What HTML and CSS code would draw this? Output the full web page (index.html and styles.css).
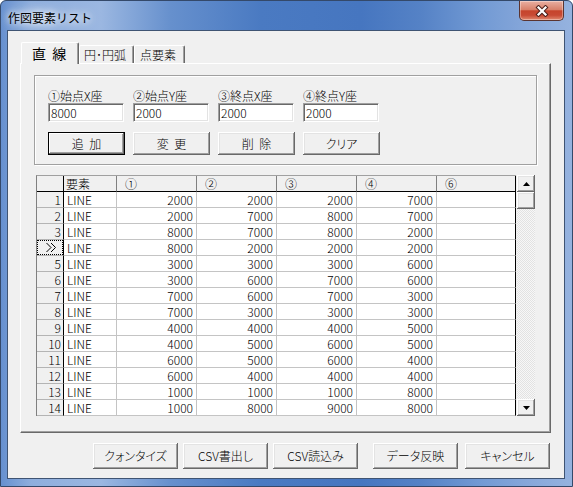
FILE: index.html
```html
<!DOCTYPE html>
<html lang="ja">
<head>
<meta charset="utf-8">
<title>作図要素リスト</title>
<link rel="stylesheet" href="styles.css">
</head>
<body>
<div class="window">
  <div class="titlebar">
    <span class="title">作図要素リスト</span>
    <div class="close">
      <svg width="14" height="12" viewBox="0 0 14 12"><path d="M3.5 2.5 L10.5 9.5 M10.5 2.5 L3.5 9.5" stroke="#4a1f1a" stroke-width="4.2" stroke-linecap="square" fill="none"/><path d="M3.5 2.5 L10.5 9.5 M10.5 2.5 L3.5 9.5" stroke="#ffffff" stroke-width="2.2" stroke-linecap="square" fill="none"/></svg>
    </div>
  </div>
  <div class="client">
    <div class="tabs">
      <div class="tab active">直&nbsp;&nbsp;線</div>
      <div class="tab t2">円･円弧</div>
      <div class="tab t3">点要素</div>
    </div>
    <div class="panel">
      <div class="group">
        <div class="fields">
          <div class="field"><div class="label">①始点X座</div><div class="input">8000</div></div>
          <div class="field"><div class="label">②始点Y座</div><div class="input">2000</div></div>
          <div class="field"><div class="label">③終点X座</div><div class="input">2000</div></div>
          <div class="field"><div class="label">④終点Y座</div><div class="input">2000</div></div>
        </div>
        <div class="actions">
          <div class="btn default">追&nbsp;&nbsp;加</div>
          <div class="btn">変&nbsp;&nbsp;更</div>
          <div class="btn">削&nbsp;&nbsp;除</div>
          <div class="btn">クリア</div>
        </div>
      </div>
      <div class="grid">
        <div class="sheet">
          <div class="c corner"></div><div class="c hd h0">要素</div><div class="c hd">①</div><div class="c hd">②</div><div class="c hd">③</div><div class="c hd">④</div><div class="c hd last">⑥</div>
          <div class="c rh">1</div><div class="c txt">LINE</div><div class="c num">2000</div><div class="c num">2000</div><div class="c num">2000</div><div class="c num">7000</div><div class="c last"></div>
          <div class="c rh">2</div><div class="c txt">LINE</div><div class="c num">2000</div><div class="c num">7000</div><div class="c num">8000</div><div class="c num">7000</div><div class="c last"></div>
          <div class="c rh">3</div><div class="c txt">LINE</div><div class="c num">8000</div><div class="c num">7000</div><div class="c num">8000</div><div class="c num">2000</div><div class="c last"></div>
          <div class="c rh cur"><span class="focus"><svg width="13" height="11" viewBox="0 0 13 11"><path d="M1.5 1 L6 5.5 L1.5 10 M6 1 L10.5 5.5 L6 10" stroke="#000" stroke-width="1" fill="none"/></svg></span></div><div class="c txt">LINE</div><div class="c num">8000</div><div class="c num">2000</div><div class="c num">2000</div><div class="c num">2000</div><div class="c last"></div>
          <div class="c rh">5</div><div class="c txt">LINE</div><div class="c num">3000</div><div class="c num">3000</div><div class="c num">3000</div><div class="c num">6000</div><div class="c last"></div>
          <div class="c rh">6</div><div class="c txt">LINE</div><div class="c num">3000</div><div class="c num">6000</div><div class="c num">7000</div><div class="c num">6000</div><div class="c last"></div>
          <div class="c rh">7</div><div class="c txt">LINE</div><div class="c num">7000</div><div class="c num">6000</div><div class="c num">7000</div><div class="c num">3000</div><div class="c last"></div>
          <div class="c rh">8</div><div class="c txt">LINE</div><div class="c num">7000</div><div class="c num">3000</div><div class="c num">3000</div><div class="c num">3000</div><div class="c last"></div>
          <div class="c rh">9</div><div class="c txt">LINE</div><div class="c num">4000</div><div class="c num">4000</div><div class="c num">4000</div><div class="c num">5000</div><div class="c last"></div>
          <div class="c rh">10</div><div class="c txt">LINE</div><div class="c num">4000</div><div class="c num">5000</div><div class="c num">6000</div><div class="c num">5000</div><div class="c last"></div>
          <div class="c rh">11</div><div class="c txt">LINE</div><div class="c num">6000</div><div class="c num">5000</div><div class="c num">6000</div><div class="c num">4000</div><div class="c last"></div>
          <div class="c rh">12</div><div class="c txt">LINE</div><div class="c num">6000</div><div class="c num">4000</div><div class="c num">4000</div><div class="c num">4000</div><div class="c last"></div>
          <div class="c rh">13</div><div class="c txt">LINE</div><div class="c num">1000</div><div class="c num">1000</div><div class="c num">1000</div><div class="c num">8000</div><div class="c last"></div>
          <div class="c rh">14</div><div class="c txt">LINE</div><div class="c num">1000</div><div class="c num">8000</div><div class="c num">9000</div><div class="c num">8000</div><div class="c last"></div>
        </div>
        <div class="vscroll">
          <div class="sbtn"><svg width="7" height="4" viewBox="0 0 7 4"><path d="M3.5 0 L7 4 L0 4 Z" fill="#000"/></svg></div>
          <div class="thumb"></div>
          <div class="track"></div>
          <div class="sbtn"><svg width="7" height="4" viewBox="0 0 7 4"><path d="M0 0 L7 0 L3.5 4 Z" fill="#000"/></svg></div>
        </div>
      </div>
    </div>
    <div class="footer">
      <div class="btn fbtn">クォンタイズ</div>
      <div class="btn fbtn">CSV書出し</div>
      <div class="btn fbtn">CSV読込み</div>
      <div class="btn fbtn gap">データ反映</div>
      <div class="btn fbtn gap2">キャンセル</div>
    </div>
  </div>
</div>
</body>
</html>
```

FILE: styles.css
```css
* { box-sizing: border-box; }
html, body { margin: 0; padding: 0; }
body {
  width: 573px;
  height: 487px;
  overflow: hidden;
  background: #ffffff;
  font-family: "Noto Sans CJK JP", "Noto Sans", sans-serif;
  font-size: 12px;
  font-weight: 300;
  color: #000;
}

.window {
  width: 573px;
  height: 487px;
  border: 1px solid #34496a;
  border-radius: 6px 6px 0 0;
  background-color: #5a86c8;
  background-image: linear-gradient(90deg, #6690cf 0px, #8eaedd 30px, #9bb7e1 100px, #6690cd 170px, #4a7ac2 260px, #4676c0 360px, #5582c6 420px, #729ad4 480px, #88a8da 530px, #96b3df 573px);
  display: flex;
  flex-direction: column;
}

.titlebar {
  height: 29px;
  display: flex;
  justify-content: space-between;
  align-items: flex-start;
  padding-left: 7px;
}
.title {
  margin-top: 10px;
  line-height: 14px;
  font-size: 12px;
  font-weight: 400;
  color: #000;
  text-shadow: 0 0 6px rgba(255,255,255,0.95), 0 0 10px rgba(255,255,255,0.85), 0 0 16px rgba(255,255,255,0.7);
}
.close {
  width: 45px;
  height: 20px;
  margin-right: 8px;
  border: 1px solid #5b3430;
  border-top: none;
  border-radius: 0 0 5px 5px;
  background: linear-gradient(180deg, #e9b0a2 0%, #d8816b 45%, #c6442c 52%, #c84a34 75%, #e08a70 100%);
  box-shadow: inset 0 0 0 1px rgba(255,255,255,0.35);
  display: flex;
  align-items: center;
  justify-content: center;
}

.client {
  flex: 1;
  margin: 0 7px 7px 6px;
  background: #f0f0f0;
  border: 1px solid #3f5473;
  padding: 11px 0 0 12px;
}

.tabs {
  display: flex;
  align-items: flex-end;
  height: 21px;
  padding-left: 1px;
  position: relative;
  z-index: 1;
}
.tab {
  height: 18px;
  line-height: 15px;
  border-top: 1px solid #fff;
  border-left: 1px solid #fff;
  border-right: 1px solid #696969;
  box-shadow: inset -1px 0 #a0a0a0;
  border-radius: 2px 2px 0 0;
  background: #f0f0f0;
  white-space: nowrap;
  font-feature-settings: "palt";
}
.tab.active {
  width: 58px;
  height: 22px;
  margin-bottom: -1px;
  padding-left: 10px;
  padding-top: 3px;
  font-size: 14px;
  font-weight: 400;
  line-height: 15px;
}
.tab.t2 { width: 55px; padding-left: 4px; padding-top: 1px; }
.tab.t3 { width: 51px; padding-left: 5px; padding-top: 1px; }

.panel {
  width: 531px;
  height: 370px;
  border: 1px solid;
  border-color: #fff #696969 #696969 #fff;
  box-shadow: inset -1px -1px #a0a0a0;
  padding: 11px 0 0 13px;
}

.group {
  width: 503px;
  height: 90px;
  border: 1px solid #a0a0a0;
  box-shadow: 1px 1px 0 #fff, inset 1px 1px 0 #fff;
  padding: 13px 0 0 13px;
}
.fields {
  display: flex;
  gap: 8px;
}
.field { width: 77px; }
.label {
  height: 14px;
  line-height: 14px;
  white-space: nowrap;
}
.input {
  width: 76px;
  height: 19px;
  background: #fff;
  border: 1px solid;
  border-color: #a0a0a0 #fff #fff #a0a0a0;
  box-shadow: inset 1px 1px 0 #696969, inset -1px -1px 0 #e3e3e3;
  padding-left: 2px;
  line-height: 17px;
}
.actions {
  display: flex;
  gap: 8px;
  margin-top: 10px;
}

.btn {
  background: #f0f0f0;
  box-shadow: inset -1px -1px 0 #696969, inset 1px 1px 0 #fff, inset -2px -2px 0 #a0a0a0, inset 2px 2px 0 #e3e3e3;
  display: flex;
  align-items: center;
  justify-content: center;
  white-space: nowrap;
  line-height: 14px;
  font-feature-settings: "palt";
}
.actions .btn {
  width: 77px;
  height: 23px;
}
.btn.default {
  box-shadow: inset 0 0 0 1px #000, inset -2px -2px 0 #696969, inset 2px 2px 0 #fff, inset -3px -3px 0 #a0a0a0;
}

.grid {
  display: flex;
  margin: 10px 0 0 2px;
  width: 499px;
  height: 241px;
}
.sheet {
  width: 480px;
  height: 241px;
  display: grid;
  grid-template-columns: 27px 53px 80px 80px 80px 80px 79px;
  grid-auto-rows: 16px;
  align-content: start;
  border-left: 1px solid #808080;
  border-top: 1px solid #a0a0a0;
  background: #fff;
}
.c {
  border-right: 1px solid #c4c4c4;
  border-bottom: 1px solid #c4c4c4;
  line-height: 15px;
  white-space: nowrap;
  overflow: hidden;
}
.corner {
  background: #f0f0f0;
  border-right-color: #000;
  border-bottom-color: #000;
}
.hd {
  background: #f0f0f0;
  border-right-color: #808080;
  border-bottom-color: #000;
  padding-left: 8px;
}
.hd.h0 { padding-left: 2px; }
.hd.last { border-right-color: #000; }
.rh {
  background: #f0f0f0;
  border-right-color: #000;
  border-bottom-color: #b4b4b4;
  text-align: right;
  padding-right: 2px;
}
.rh.cur { padding: 0; }
.focus {
  display: flex;
  height: 15px;
  align-items: center;
  justify-content: center;
  border: 1px dotted #000;
  padding-left: 2px;
}
.txt { padding-left: 3px; }
.num { text-align: right; padding-right: 3px; }
.last { border-right-color: #000; }

.vscroll {
  width: 18px;
  margin-left: 1px;
  display: flex;
  flex-direction: column;
  background: repeating-conic-gradient(#f7f7f7 0 25%, #e2e2e2 0 50%) 0 0 / 2px 2px;
}
.sbtn, .thumb {
  height: 17px;
  background: #f0f0f0;
  box-shadow: inset -1px -1px 0 #696969, inset 1px 1px 0 #fff, inset -2px -2px 0 #a0a0a0, inset 2px 2px 0 #e3e3e3;
  display: flex;
  align-items: center;
  justify-content: center;
}
.track { flex: 1; }

.footer {
  display: flex;
  width: 531px;
  justify-content: flex-end;
  margin-top: 10px;
  padding-right: 1px;
  gap: 5px;
}
.fbtn {
  width: 85px;
  height: 26px;
}
.fbtn.gap { margin-left: 10px; }
.fbtn.gap2 { margin-left: 2px; }
```
